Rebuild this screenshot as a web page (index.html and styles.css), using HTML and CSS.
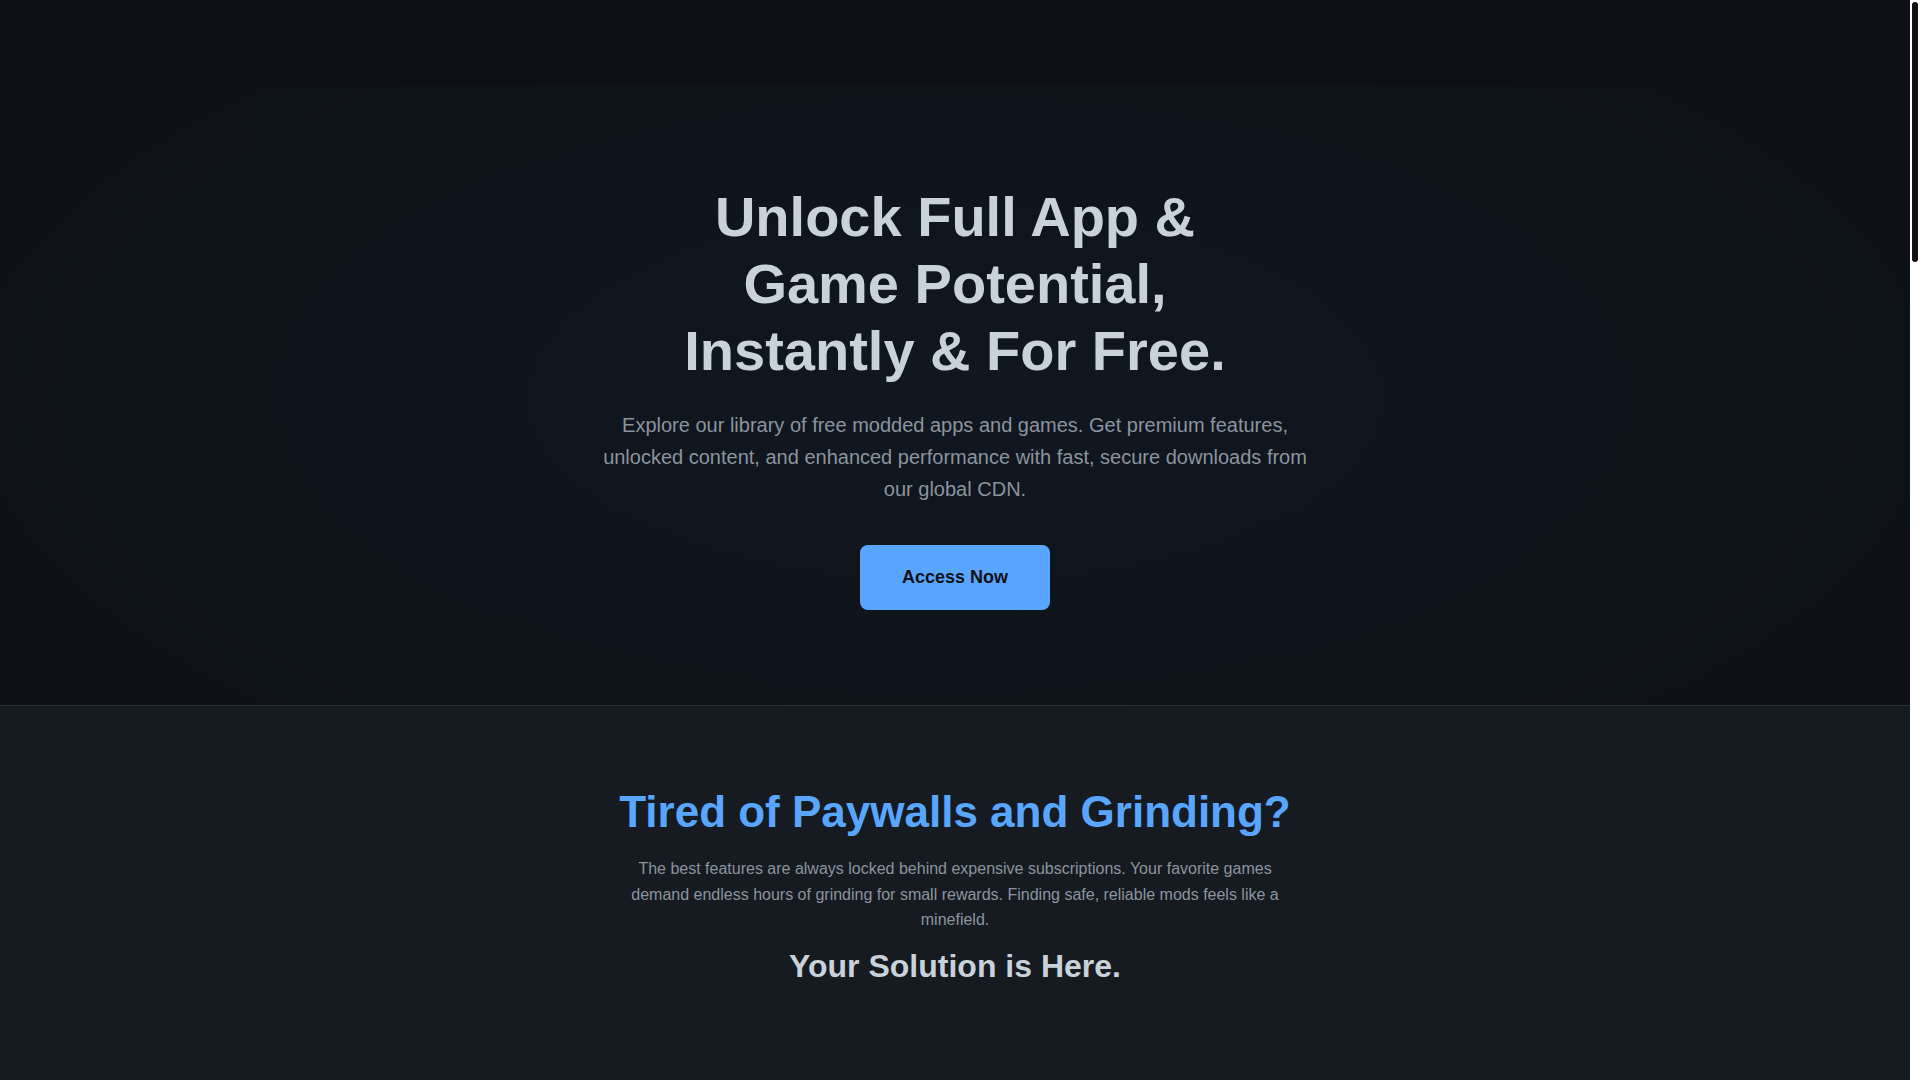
FILE: index.html
```html
<!DOCTYPE html>
<html lang="en">
<head>
<meta charset="utf-8">
<title>Unlock Full App &amp; Game Potential</title>
<link rel="stylesheet" href="styles.css">
</head>
<body>
<div class="page">
  <header class="site-header"></header>
  <main>
    <section class="hero">
      <h1 class="hero-title">Unlock Full App &amp; Game Potential, Instantly &amp; For Free.</h1>
      <p class="hero-text">Explore our library of free modded apps and games. Get premium features, unlocked content, and enhanced performance with fast, secure downloads from our global CDN.</p>
      <a class="btn-primary" href="#">Access Now</a>
    </section>

    <section class="problem">
      <h2 class="problem-title">Tired of Paywalls and Grinding?</h2>
      <p class="problem-text">The best features are always locked behind expensive subscriptions. Your favorite games demand endless hours of grinding for small rewards. Finding safe, reliable mods feels like a minefield.</p>
      <h3 class="solution-title">Your Solution is Here.</h3>
    </section>
  </main>
</div>
<div class="scrollbar" aria-hidden="true"><div class="scrollbar-thumb"></div></div>
</body>
</html>
```

FILE: styles.css
```css
* { box-sizing: border-box; }

html, body {
  margin: 0;
  padding: 0;
  height: 100%;
  overflow: hidden;
}

body {
  background: #161b22;
  color: #c9d1d9;
  font-family: "Liberation Sans", Arial, Helvetica, sans-serif;
}

.page {
  height: 100vh;
  margin-right: 10px;
  background: #161b22;
}

.scrollbar {
  position: fixed;
  top: 0;
  right: 0;
  width: 10px;
  height: 100vh;
  padding: 2px;
  background: #ffffff;
}

.scrollbar-thumb {
  width: 6px;
  height: 260px;
  background: #121212;
  border-radius: 3px;
}

.site-header {
  height: 85px;
  background: #0d1015;
}

.hero {
  display: flex;
  flex-direction: column;
  align-items: center;
  text-align: center;
  padding: 98px 20px 95px;
  background:
    radial-gradient(ellipse 55% 75% at 50% 50%, rgba(88, 166, 255, 0.045), rgba(88, 166, 255, 0) 100%),
    #0d1117;
  border-bottom: 1px solid #2b3039;
}

.hero-title {
  margin: 0 0 24px;
  max-width: 600px;
  font-size: 56px;
  line-height: 1.2;
  font-weight: 700;
  color: #c9d1d9;
}

.hero-text {
  margin: 0 0 40px;
  max-width: 720px;
  font-size: 20px;
  line-height: 1.6;
  color: #8b949e;
}

.btn-primary {
  display: inline-block;
  padding: 20px 42px;
  font-size: 18px;
  line-height: 25px;
  font-weight: 700;
  color: #0d1117;
  background: #58a6ff;
  border-radius: 8px;
  text-decoration: none;
}

.problem {
  background: #161b22;
  padding: 80px 20px;
  text-align: center;
}

.problem-title {
  margin: 0 0 18px;
  font-size: 44px;
  line-height: 1.2;
  font-weight: 700;
  color: #58a6ff;
}

.problem-text {
  margin: 0 auto;
  max-width: 672px;
  font-size: 16px;
  line-height: 25.2px;
  color: #8b949e;
}

.solution-title {
  margin: 15px 0 0;
  font-size: 32px;
  line-height: 1.2;
  font-weight: 700;
  color: #c9d1d9;
}
```
